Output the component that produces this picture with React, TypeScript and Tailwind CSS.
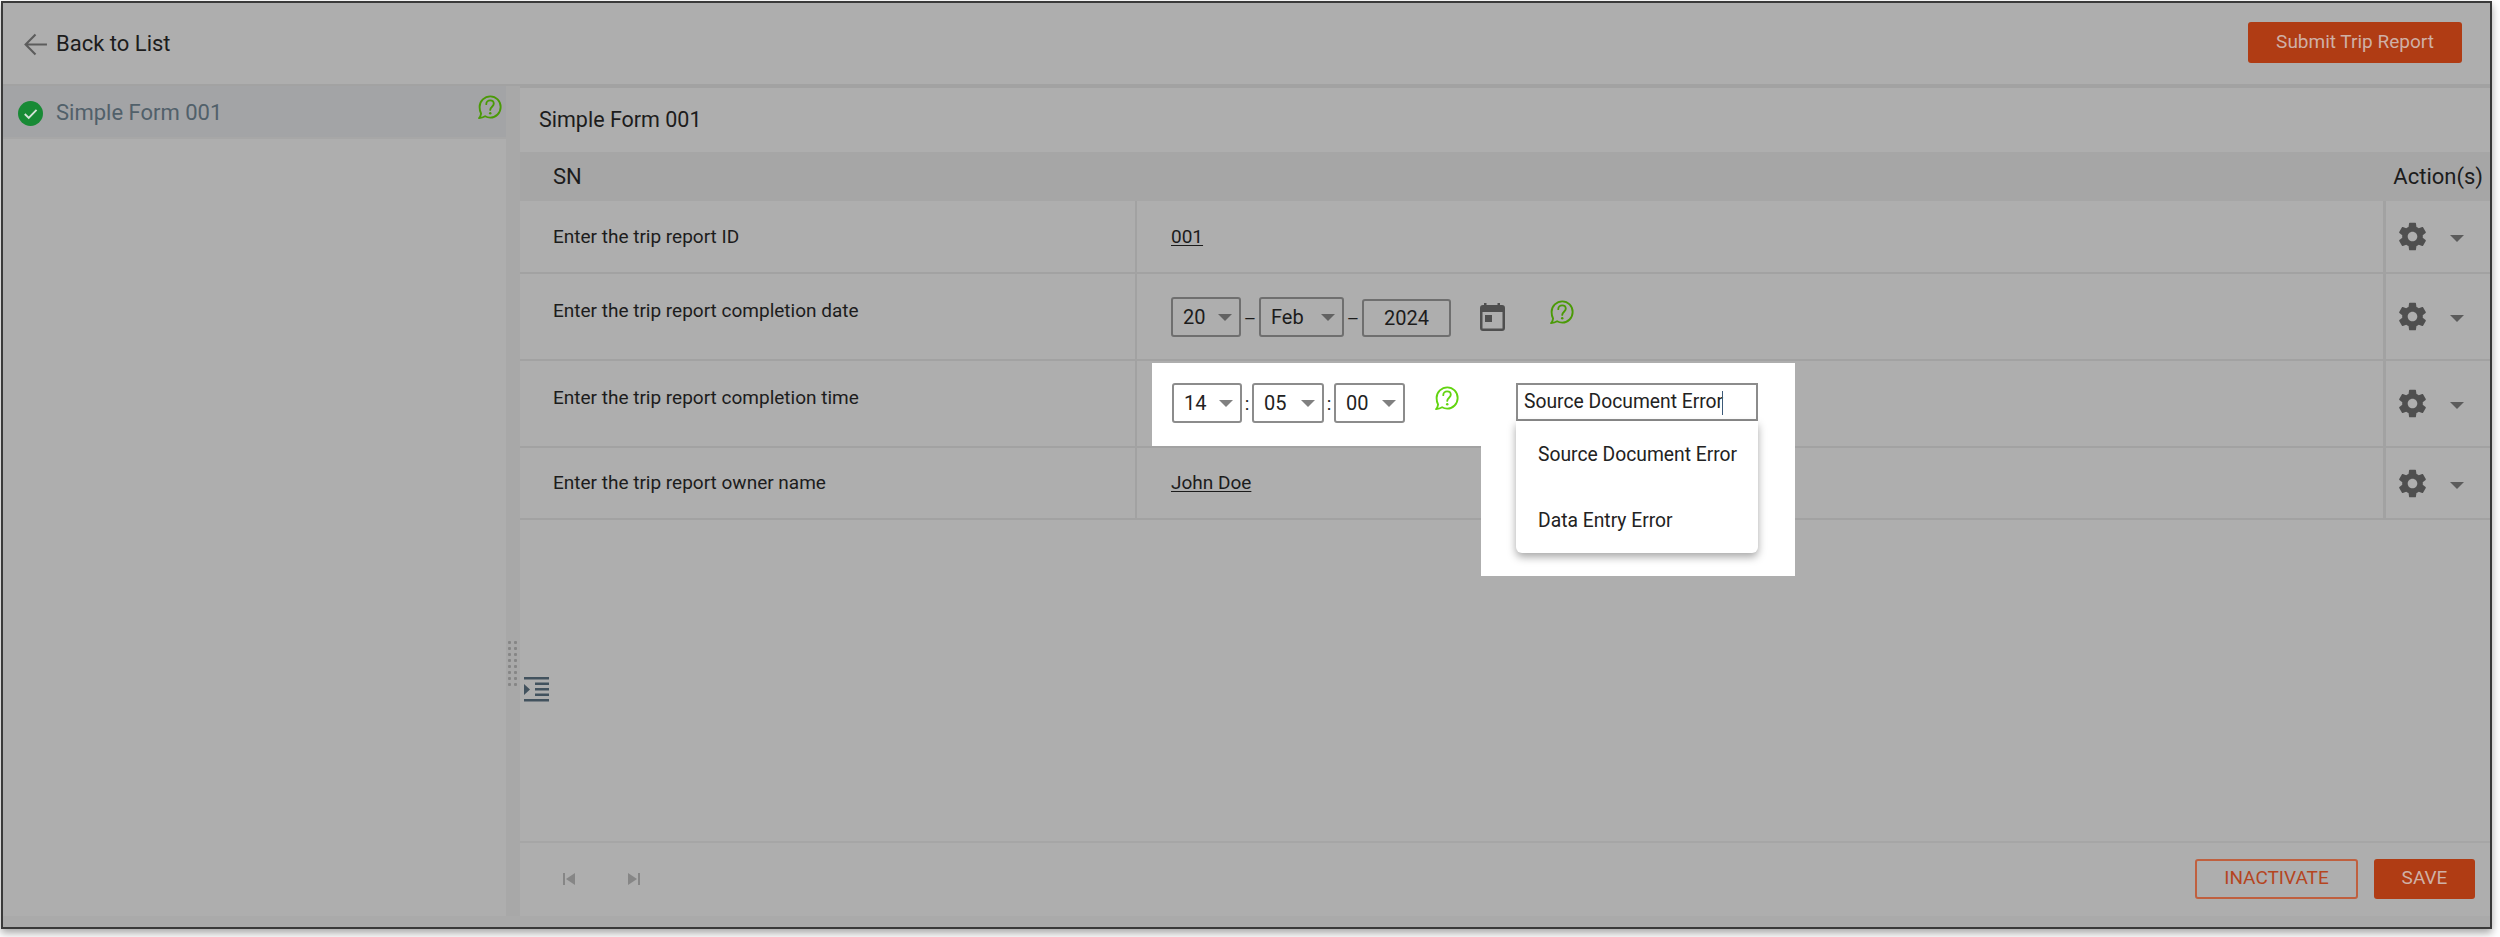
import React from "react";

function Help({ className, color }: { className: string; color: string }) {
  return (
    <svg viewBox="0 0 24 24" className={className} fill="none" stroke={color} strokeWidth="1.8">
      <path d="M12.800 1.300c5.400 0 9.900 4.500 9.900 10.200S18.200 21.700 12.800 21.700c-1.900 0-3.500-.4-5-1.300-1.500.9-3.500 1.600-5.800 1.800 1.100-1.200 1.700-2.900 1.900-4.400C3 16.200 2.500 14 2.500 11.500 2.500 5.800 7.400 1.300 12.800 1.300z" strokeLinejoin="round" />
      <path d="M8.900 8.800c0-2.100 1.700-3.600 3.700-3.600s3.500 1.400 3.500 3.200c0 2.800-3.400 2.900-3.400 5.900" strokeLinecap="round" />
      <circle cx="12.700" cy="17.400" r="1.200" fill={color} stroke="none" />
    </svg>
  );
}

function Caret({ className }: { className: string }) {
  return <span className={"inline-block w-0 h-0 border-x-[7px] border-x-transparent border-t-[7px] " + className} />;
}

function Sel({ w, v, light }: { w: string; v: string; light?: boolean }) {
  return (
    <div className={"h-[40px] border-2 rounded-[3px] flex items-center justify-between pl-[10px] pr-[7px] text-[20px] " + w + " " + (light ? "border-[#8c8c8c] bg-white" : "border-[#6f6f6f]")}>
      <span>{v}</span>
      <Caret className={light ? "border-t-[#808080]" : "border-t-[#626262]"} />
    </div>
  );
}

function Gear() {
  return (
    <div className="w-[107px] shrink-0 border-l-[3px] border-[#a2a2a2] flex items-center pl-[10px] gap-[21px]">
      <svg viewBox="0 0 24 24" className="w-[33px] h-[33px]" fill="#4f4f4f">
        <path d="M19.430 12.980c.04-.32.07-.64.07-.98s-.03-.66-.07-.98l2.110-1.650c.19-.15.240-.42.120-.64l-2-3.460c-.12-.22-.39-.3-.61-.22l-2.490 1c-.52-.4-1.080-.73-1.690-.98l-.38-2.650A.488.488 0 0 0 14 2h-4c-.25 0-.46.18-.49.42l-.38 2.650c-.61.25-1.170.59-1.690.98l-2.490-1c-.23-.09-.49 0-.61.22l-2 3.460c-.13.22-.07.49.12.64l2.110 1.650c-.04.32-.07.65-.07.98s.03.66.07.98l-2.110 1.650c-.19.15-.24.42-.12.64l2 3.460c.12.22.39.3.61.22l2.490-1c.52.4 1.080.73 1.690.98l.38 2.650c.03.24.24.42.49.42h4c.25 0 .46-.18.49-.42l.38-2.650c.61-.25 1.170-.59 1.690-.98l2.490 1c.23.09.49 0 .61-.22l2-3.460c.12-.22.07-.49-.12-.64l-2.110-1.650zM12 15.500c-1.930 0-3.500-1.570-3.500-3.500s1.570-3.500 3.500-3.500 3.500 1.570 3.500 3.500-1.570 3.500-3.500 3.500z" />
      </svg>
      <Caret className="border-t-[#5c5c5c] mt-[4px]" />
    </div>
  );
}

export default function App() {
  return (
    <div className="h-[937px] w-[2500px] bg-white pt-px pl-px font-['Roboto',sans-serif] text-[#1c1c1c]">
      <div className="w-[2491px] h-[928px] border-2 border-[#3a3a3a] bg-[#aeaeae] flex flex-col shadow-[0_4px_8px_rgba(0,0,0,0.35)]">
        <header className="h-[83px] shrink-0 border-b-2 border-[#a2a2a2] flex items-center justify-between pl-[20px] pr-[28px]">
          <div className="flex items-center gap-[8px]">
            <svg viewBox="0 0 24 24" className="w-[25px] h-[25px] mt-[2px]" fill="none" stroke="#5c5c5c" strokeWidth="2">
              <path d="M23 12H2.500M12 2.500 2.500 12l9.500 9.500" />
            </svg>
            <span className="text-[22px]">Back to List</span>
          </div>
          <button className="w-[214px] h-[41px] -mt-[2px] rounded-[3px] bg-[#b03c14] text-[#cfb0a6] text-[19px]">Submit Trip Report</button>
        </header>
        <div className="flex-1 flex min-h-0">
          <aside className="w-[503px] shrink-0">
            <div className="h-[53px] bg-[#a3a4a6] border-b-2 border-[#a7a7a7] flex items-center pl-[15px] relative">
              <svg viewBox="0 0 24 24" className="w-[25px] h-[25px] mr-[13px] mt-[3px]">
                <circle cx="12" cy="12" r="12" fill="#188a35" />
                <path d="m6.500 12.500 3.800 3.800 7.500-7.800" fill="none" stroke="#d5e3d8" strokeWidth="1.800" />
              </svg>
              <span className="text-[22px] text-[#51606a] mt-[1px]">Simple Form 001</span>
              <Help className="w-[25px] h-[25px] absolute left-[474px] top-[9px]" color="#4a9a06" />
            </div>
          </aside>
          <div className="w-[14px] shrink-0 bg-[#a8a8a8] relative">
            <div className="absolute left-[2px] top-[555px] grid grid-cols-2 gap-x-[3px] gap-y-[3px]">
              {Array.from({ length: 16 }).map((_, i) => (
                <span key={i} className="w-[3px] h-[3px] bg-[#868686] rounded-[1px]" />
              ))}
            </div>
            <svg viewBox="0 0 25 25" className="absolute left-[18px] top-[591px] w-[25px] h-[25px]" fill="#42525e">
              <rect x="0" y="0" width="25" height="2.500" />
              <rect x="11" y="5.500" width="14" height="2.500" />
              <rect x="11" y="11" width="14" height="2.500" />
              <rect x="11" y="16.500" width="14" height="2.500" />
              <rect x="0" y="22" width="25" height="2.500" />
              <path d="M0 7v11l6-5.500z" />
            </svg>
          </div>
          <main className="flex-1 min-w-0 flex flex-col text-[19px]">
            <div className="h-[66px] flex items-center pl-[19px] text-[21.500px] border-t-2 border-[#a2a2a2]">Simple Form 001</div>
            <div className="h-[49px] bg-[#a6a6a6] flex items-center justify-between pl-[33px] pr-[7px] text-[22px]">
              <span>SN</span>
              <span>Action(s)</span>
            </div>
            <div className="h-[73px] flex border-b-2 border-[#a2a2a2]">
              <div className="w-[617px] shrink-0 border-r-2 border-[#a2a2a2] pl-[33px] pt-[1px] flex items-center">Enter the trip report ID</div>
              <div className="flex-1 pl-[34px] pt-[1px] flex items-center"><span className="underline underline-offset-2">001</span></div>
              <Gear />
            </div>
            <div className="h-[87px] flex border-b-2 border-[#a2a2a2]">
              <div className="w-[617px] shrink-0 border-r-2 border-[#a2a2a2] pl-[33px] pt-[23px]">Enter the trip report completion date</div>
              <div className="flex-1 pl-[34px] pt-[23px] flex items-start">
                <Sel w="w-[70px]" v="20" />
                <span className="w-[18px] text-center self-center -mt-[18px]">–</span>
                <Sel w="w-[85px]" v="Feb" />
                <span className="w-[18px] text-center self-center -mt-[18px]">–</span>
                <div className="w-[89px] h-[38px] mt-[2px] border-2 border-[#6f6f6f] rounded-[3px] flex items-center justify-center text-[20px]">2024</div>
                <svg viewBox="0 0 25 28" className="w-[25px] h-[28px] ml-[29px] mt-[6px]" fill="#4f4f4f">
                  <path d="M3 2h1V0h2.500v2h11V0h2.500v2h2a3 3 0 0 1 3 3v20a3 3 0 0 1-3 3H3a3 3 0 0 1-3-3V5a3 3 0 0 1 3-3zM2.500 9v16.500h20V9z" />
                  <rect x="5" y="12" width="7" height="7" />
                </svg>
                <Help className="w-[25px] h-[25px] ml-[44px] mt-[3px]" color="#4a9a06" />
              </div>
              <Gear />
            </div>
            <div className="h-[87px] flex border-b-2 border-[#a2a2a2]">
              <div className="w-[617px] shrink-0 border-r-2 border-[#a2a2a2] pl-[33px] pt-[23px]">Enter the trip report completion time</div>
              <div className="flex-1 relative">
                <div className="ml-[15px] mt-[2px] w-[643px] h-[83px] bg-white pl-[20px] pt-[20px] flex items-start text-[#222]">
                  <Sel w="w-[70px]" v="14" light />
                  <span className="w-[10px] text-center self-center -mt-[20px]">:</span>
                  <Sel w="w-[72px]" v="05" light />
                  <span className="w-[10px] text-center self-center -mt-[20px]">:</span>
                  <Sel w="w-[71px]" v="00" light />
                  <Help className="w-[25px] h-[25px] ml-[29px] mt-[3px]" color="#62d410" />
                  <div className="ml-[57px] w-[242px] h-[38px] border-2 border-[#8c8c8c] flex items-center pl-[6px] pt-px text-[19.300px]">
                    Source Document Error<span className="w-px h-[24px] bg-[#3c5a78] -ml-px" />
                  </div>
                </div>
                <div className="absolute left-[344px] top-[85px] w-[314px] h-[130px] bg-white z-10 pl-[35px]">
                  <div className="w-[242px] h-[132px] -mt-[25px] rounded-b-[6px] bg-white shadow-[0_4px_8px_rgba(0,0,0,0.35)] text-[19.300px] text-[#222] pl-[22px] pt-px">
                    <div className="h-[66px] flex items-center">Source Document Error</div>
                    <div className="h-[66px] flex items-center">Data Entry Error</div>
                  </div>
                </div>
              </div>
              <Gear />
            </div>
            <div className="h-[72px] flex border-b-2 border-[#a2a2a2]">
              <div className="w-[617px] shrink-0 border-r-2 border-[#a2a2a2] pl-[33px] pt-[1px] flex items-center">Enter the trip report owner name</div>
              <div className="flex-1 pl-[34px] pt-[1px] flex items-center"><span className="underline underline-offset-2">John Doe</span></div>
              <Gear />
            </div>
            <div className="flex-1" />
            <footer className="h-[75px] border-t-2 border-[#a6a6a6] flex items-center justify-between pl-[43px] pr-[15px] pb-[2px]">
              <div className="flex gap-[53px]">
                <svg viewBox="0 0 12 12" className="w-[12px] h-[12px]" fill="#868686"><rect width="2" height="12" /><path d="M12 0v12L3 6z" /></svg>
                <svg viewBox="0 0 12 12" className="w-[12px] h-[12px]" fill="#868686"><rect x="10" width="2" height="12" /><path d="M0 0v12l9-6z" /></svg>
              </div>
              <div className="flex gap-[16px] text-[19px]">
                <button className="w-[163px] h-[40px] border-2 border-[#c0603f] rounded-[3px] text-[#b5451f]">INACTIVATE</button>
                <button className="w-[101px] h-[40px] rounded-[3px] bg-[#b03c14] text-[#cfb0a6]">SAVE</button>
              </div>
            </footer>
          </main>
        </div>
        <div className="h-[11px] shrink-0 bg-[#aaaaaa]" />
      </div>
    </div>
  );
}
